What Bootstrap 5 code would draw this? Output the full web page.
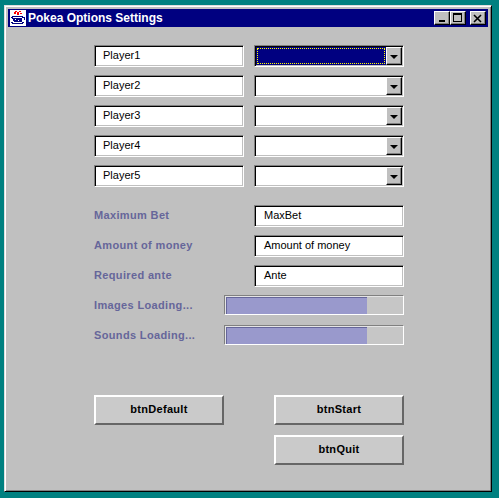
<!doctype html>
<html lang="en"><head><meta charset="utf-8">
<link rel="stylesheet" href="https://cdn.jsdelivr.net/npm/bootstrap@5.3.0/dist/css/bootstrap.min.css">
<style>
html,body{height:100%}
body.desk{background:#008080;margin:0;overflow:hidden;font:11px/1 "Liberation Sans",Arial,sans-serif;color:#000;-webkit-font-smoothing:none}
.win{position:absolute;left:4px;top:5px;width:488px;height:487px;background:#c0c0c0;border:1px solid;border-color:#dfdfdf #000 #000 #dfdfdf;box-shadow:inset 1px 1px 0 #fff,inset -1px -1px 0 #808080;padding:3px}
.ttl{height:18px;background:#000080;color:#fff;font-weight:700;font-size:12px;padding:0 2px}
.ticon{margin-right:2px;flex:none}
.tbtn{width:16px;height:14px;background:#c0c0c0;border:1px solid;border-color:#fff #000 #000 #fff;box-shadow:inset -1px -1px 0 #808080;padding:0}
.pane{width:310px;margin:18px 0 0 86px}
.sunk{height:22px;width:150px;flex:none;background:#fff;border:1px solid;border-color:#808080 #fff #fff #808080;box-shadow:inset 1px 1px 0 #000,inset -1px -1px 0 #c0c0c0;font-size:11px;padding:0 0 0 9px;border-radius:0;color:#000;line-height:18px}
.pname{padding-left:8px}
.combo{padding:0;position:relative}
.combo.act{background:#000080}
.combo.act::before{content:"";position:absolute;left:2px;top:2px;right:18px;bottom:2px;border:1px dotted #ff0}
.arr{position:absolute;right:1px;top:1px;bottom:1px;width:16px;background:#c0c0c0;border:1px solid;border-color:#fff #000 #000 #fff;box-shadow:inset -1px -1px 0 #808080}
.arr::after{content:"";position:absolute;left:3px;top:7px;border:4px solid transparent;border-top-color:#000;border-bottom:0}
.lbl{color:#66669a;font-weight:700;font-size:11px;letter-spacing:.35px;margin-bottom:2px}
.lbl2{margin-bottom:0}
.pbar{height:20px;width:180px;flex:none;border:1px solid;border-color:#808080 #fff #fff #808080;background:#c6c6c6;border-radius:0;padding:1px 0 0 1px;box-shadow:inset 1px 1px 0 #e4e4e4}
.pbar .progress-bar{background:#9999cc;width:79.5%;box-shadow:inset 1px 1px 0 #66669a}
.grp{margin-top:18px}
.sndrow{margin-top:2px}
.acts{margin-top:50px;column-gap:50px;row-gap:10px;display:grid;grid-template-columns:130px 130px}
.jbtn{height:30px;background:#cacaca;border:solid;border-width:2px;border-color:#fff #666 #666 #fff;border-radius:0;color:#000;font-size:11px;font-weight:700;padding:0 0 2px;line-height:1;letter-spacing:.3px}
</style></head>
<body class="desk">
<div class="win d-flex flex-column">
  <div class="ttl d-flex align-items-center">
    <svg width="16" height="16" viewBox="0 0 16 16" shape-rendering="crispEdges" class="ticon"><rect width="16" height="16" fill="#fff"/><path d="M5 1h2v1H5zM9 1h2v1H9zM4 2h2v2H4zM7 2h2v3H7zM10 3h2v1h-2z" fill="#f00"/><path d="M2 6h11v1H2zM1 7h2v1H1zM12 7h3v1h-3zM2 8h10v1H2zM3 9h9v2H3zM14 8h1v2h-1zM4 11h8v1H4zM1 12h2v1H1zM12 12h2v1h-2zM2 13h11v1H2z" fill="#000080"/><path d="M5 9h1v1H5zM8 10h1v1H8z" fill="#fff"/></svg>
    <span class="flex-grow-1">Pokea Options Settings</span>
    <div class="d-flex">
      <div class="tbtn d-flex align-items-end justify-content-center"><svg width="8" height="10"><rect x="1" y="6" width="6" height="2"/></svg></div>
      <div class="tbtn d-flex align-items-center justify-content-center"><svg width="10" height="10" shape-rendering="crispEdges"><path d="M0 0h9v2H0zM0 2h1v7H0zM8 2h1v7H8zM0 8h9v1H0z"/></svg></div>
      <div class="tbtn ms-1 me-0 d-flex align-items-center justify-content-center"><svg width="10" height="9" stroke="#000" stroke-width="1.6"><path d="M1 1l7 7M8 1L1 8"/></svg></div>
    </div>
  </div>
  <div class="pane d-flex flex-column">
    <div class="d-flex flex-column gap-2">
      <div class="d-flex justify-content-between"><div class="sunk pname">Player1</div><div class="sunk combo act"><span class="arr"></span></div></div>
      <div class="d-flex justify-content-between"><div class="sunk pname">Player2</div><div class="sunk combo"><span class="arr"></span></div></div>
      <div class="d-flex justify-content-between"><div class="sunk pname">Player3</div><div class="sunk combo"><span class="arr"></span></div></div>
      <div class="d-flex justify-content-between"><div class="sunk pname">Player4</div><div class="sunk combo"><span class="arr"></span></div></div>
      <div class="d-flex justify-content-between"><div class="sunk pname">Player5</div><div class="sunk combo"><span class="arr"></span></div></div>
    </div>
    <div class="grp d-flex flex-column gap-2">
      <div class="d-flex justify-content-between align-items-center"><span class="lbl">Maximum Bet</span><div class="sunk">MaxBet</div></div>
      <div class="d-flex justify-content-between align-items-center"><span class="lbl">Amount of money</span><div class="sunk">Amount of money</div></div>
      <div class="d-flex justify-content-between align-items-center"><span class="lbl">Required ante</span><div class="sunk">Ante</div></div>
      <div class="d-flex justify-content-between align-items-center"><span class="lbl lbl2">Images Loading...</span><div class="progress pbar"><div class="progress-bar"></div></div></div>
      <div class="d-flex justify-content-between align-items-center sndrow"><span class="lbl lbl2">Sounds Loading...</span><div class="progress pbar"><div class="progress-bar"></div></div></div>
    </div>
    <div class="acts">
      <button class="btn jbtn">btnDefault</button>
      <button class="btn jbtn">btnStart</button>
      <span></span>
      <button class="btn jbtn">btnQuit</button>
    </div>
  </div>
</div>
<script src="https://cdn.jsdelivr.net/npm/bootstrap@5.3.0/dist/js/bootstrap.bundle.min.js"></script>
</body></html>
